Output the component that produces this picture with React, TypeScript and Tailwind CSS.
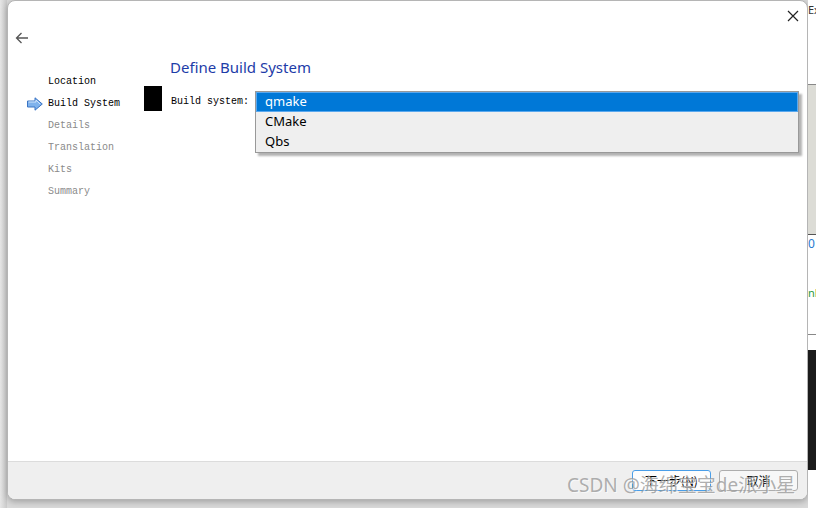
import React from "react";

const mono = { fontFamily: '"Liberation Mono", "DejaVu Sans Mono", monospace' };

export default function App() {
  const steps = [
    { t: "Location", active: false, done: true },
    { t: "Build System", active: true, done: true },
    { t: "Details", active: false, done: false },
    { t: "Translation", active: false, done: false },
    { t: "Kits", active: false, done: false },
    { t: "Summary", active: false, done: false },
  ];
  return (
    <div className="relative flex h-[508px] w-[816px] overflow-hidden bg-[#d9d9d9]" style={{ fontFamily: '"Noto Sans", "Open Sans", sans-serif' }}>
      {/* left strip */}
      <div className="flex h-full w-[7px] shrink-0 flex-col bg-gradient-to-r from-[#e6e6e6] to-[#c9c9c9]" />
      {/* dialog */}
      <div className="flex h-[500px] w-[801px] shrink-0 flex-col overflow-hidden rounded-[8px] border border-[#b5b5b5] bg-white shadow-[0_2px_6px_rgba(0,0,0,0.25)]">
        <div className="relative flex flex-1 flex-col">
          {/* top bar */}
          <div className="flex h-[27px] items-start justify-end pr-[7px] pt-[8px]">
            <svg width="14" height="14" viewBox="0 0 14 14">
              <path d="M2 2 L12 12 M12 2 L2 12" stroke="#222" strokeWidth="1.2" fill="none" />
            </svg>
          </div>
          <div className="flex h-[20px] items-center pl-[7px]">
            <svg width="14" height="14" viewBox="0 0 14 14">
              <path d="M13 7 H1.5 M6.5 2 L1.5 7 L6.5 12" stroke="#555" strokeWidth="1.3" fill="none" />
            </svg>
          </div>
          <div className="flex flex-1">
            {/* sidebar */}
            <div className="flex w-[136px] shrink-0 flex-col pt-[23px]">
              {steps.map((s) => (
                <div key={s.t} className="flex h-[22px] items-center">
                  <div className="flex w-[40px] justify-end pr-[5px]">
                    {s.active && (
                      <svg width="16" height="14" viewBox="0 0 16 14">
                        <path d="M0.5 4 H8 V0.8 L15.3 7 L8 13.2 V10 H0.5 Z" fill="#7fb2ec" stroke="#3a74c4" strokeWidth="1" />
                        <path d="M1.5 5 H9 V3 L13 7" stroke="#cfe3fb" strokeWidth="1" fill="none" />
                      </svg>
                    )}
                  </div>
                  <span className={`text-[10px] leading-none ${s.done ? "text-black" : "text-[#8a8a8a]"}`} style={mono}>
                    {s.t}
                  </span>
                </div>
              ))}
            </div>
            {/* main */}
            <div className="relative flex flex-1 flex-col">
              <div className="-mt-[1px] flex h-[40px] items-center pl-[26px] text-[15px] text-[#1d3ca8]">
                Define Build System
              </div>
              <div className="-mt-[1px] flex items-start">
                <div className="h-[25px] w-[18px] bg-black" />
                <span className="ml-[9px] mt-[10px] h-[12px] text-[10px] leading-[12px] text-black" style={mono}>Build system:</span>
              </div>
              {/* popup list */}
              <div className="absolute left-[111px] top-[43px] w-[544px] border border-[#999] bg-[#efefef] shadow-[3px_3px_2px_rgba(0,0,0,0.3)]">
                <div className="flex h-[20px] items-center border border-[#5aa8ee] bg-[#0078d7] pl-[8px] text-[13px] text-white">qmake</div>
                <div className="flex h-[20px] items-center pl-[9px] text-[13px] text-black">CMake</div>
                <div className="flex h-[20px] items-center pl-[9px] text-[13px] text-black">Qbs</div>
              </div>
            </div>
          </div>
        </div>
        {/* footer */}
        <div className="flex h-[38px] items-center justify-end gap-[8px] border-t border-[#dcdcdc] bg-[#efefef] pr-[9px]">
          <div className="flex h-[21px] w-[79px] items-center justify-center rounded-[3px] border border-[#4a9ee8] bg-[#fdfdfd] text-[12px] text-black" style={{ fontFamily: '"Noto Sans CJK SC", sans-serif' }}>
            下一步(<span className="underline">N</span>)
          </div>
          <div className="flex h-[21px] w-[79px] items-center justify-center rounded-[3px] border border-[#adadad] bg-[#f7f7f7] text-[12px] text-black" style={{ fontFamily: '"Noto Sans CJK SC", sans-serif' }}>
            取消
          </div>
        </div>
      </div>
      {/* right strip (background app) */}
      <div className="flex min-w-0 flex-1 flex-col overflow-hidden bg-white">
        <div className="h-[20px] text-[11px] leading-[20px] text-[#333]">Ex</div>
        <div className="h-[65px] border-b border-[#888] bg-white" />
        <div className="h-[150px] border-b border-[#555] bg-[#dcdcd6]" />
        <div className="h-[50px] text-[12px] text-[#2a7ad0]">0</div>
        <div className="h-[50px] border-b border-[#888] text-[11px] text-[#2a9a3a]">nl</div>
        <div className="h-[15px] bg-white" />
        <div className="h-[120px] bg-[#1b1b1b]" />
        <div className="flex-1 bg-white" />
      </div>
      {/* watermark */}
      <div className="absolute left-[567px] top-[476px] text-[19px] leading-none text-[#9a9a9a]/80" style={{ fontFamily: '"Noto Sans", "Noto Sans CJK SC", sans-serif', textShadow: "1px 1px 0 rgba(255,255,255,0.6)" }}>
        CSDN @海绵宝宝de派小星
      </div>
    </div>
  );
}
